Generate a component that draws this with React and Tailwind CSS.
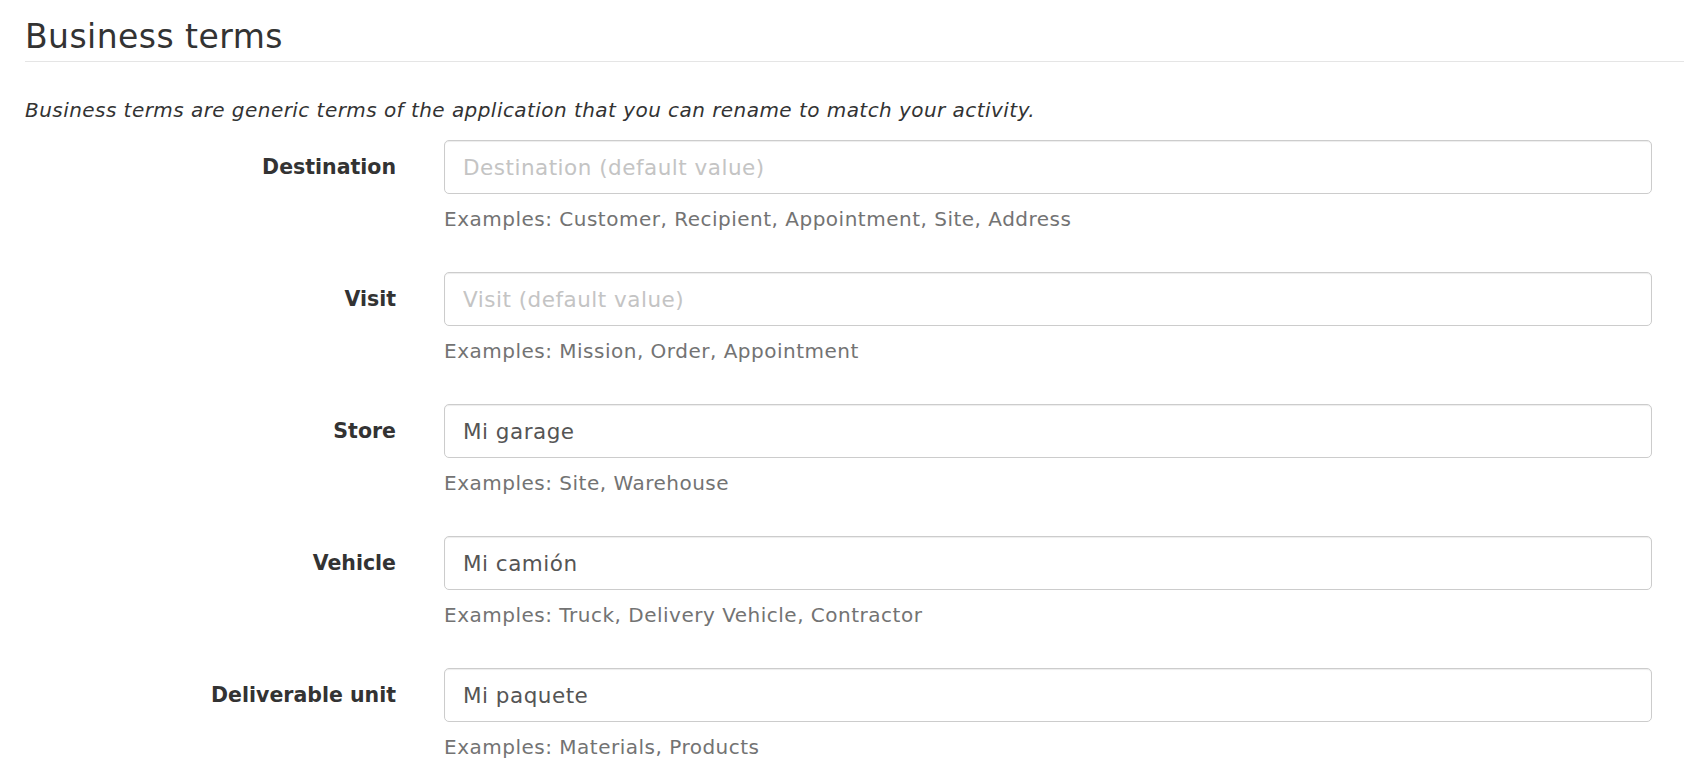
const terms = [
  { label: 'Destination', placeholder: 'Destination (default value)', value: '', help: 'Examples: Customer, Recipient, Appointment, Site, Address' },
  { label: 'Visit', placeholder: 'Visit (default value)', value: '', help: 'Examples: Mission, Order, Appointment' },
  { label: 'Store', placeholder: 'Store (default value)', value: 'Mi garage', help: 'Examples: Site, Warehouse' },
  { label: 'Vehicle', placeholder: 'Vehicle (default value)', value: 'Mi camión', help: 'Examples: Truck, Delivery Vehicle, Contractor' },
  { label: 'Deliverable unit', placeholder: 'Deliverable unit (default value)', value: 'Mi paquete', help: 'Examples: Materials, Products' },
];

const TermRow = ({ term }) => (
  <div className="grid grid-cols-[371px_1fr] gap-x-[48px] pr-[32px]">
    <label className="text-right text-[20.5px] font-bold leading-[54px] text-[#333]">
      {term.label}
    </label>
    <div className="pb-[40px]">
      <input
        type="text"
        defaultValue={term.value}
        placeholder={term.placeholder}
        className="block w-full h-[54px] px-[18px] text-[21.5px] tracking-[0.5px] text-[#555] bg-white border border-[#ccc] rounded-[5px] shadow-[inset_0_1px_1px_rgba(0,0,0,0.075)] outline-none placeholder:text-[#c4c4c4]"
      />
      <p className="mt-[13px] mb-[1px] text-[20px] tracking-[0.5px] leading-[24px] text-[#737373]">{term.help}</p>
    </div>
  </div>
);

export default function App() {
  return (
    <div className="min-h-screen bg-white pl-[25px] pt-[19px] font-['DejaVu_Sans',Verdana,sans-serif]">
      <h1 className="text-[33px] tracking-[0.45px] leading-[35px] font-normal text-[#333] pb-[7px] border-b border-[#e5e5e5]">
        Business terms
      </h1>
      <p className="mt-[35px] text-[20px] tracking-[0.45px] leading-[26px] italic text-[#333]">
        Business terms are generic terms of the application that you can rename to match your activity.
      </p>
      <div className="mt-[17px]">
        {terms.map((t) => (
          <TermRow key={t.label} term={t} />
        ))}
      </div>
    </div>
  );
}
